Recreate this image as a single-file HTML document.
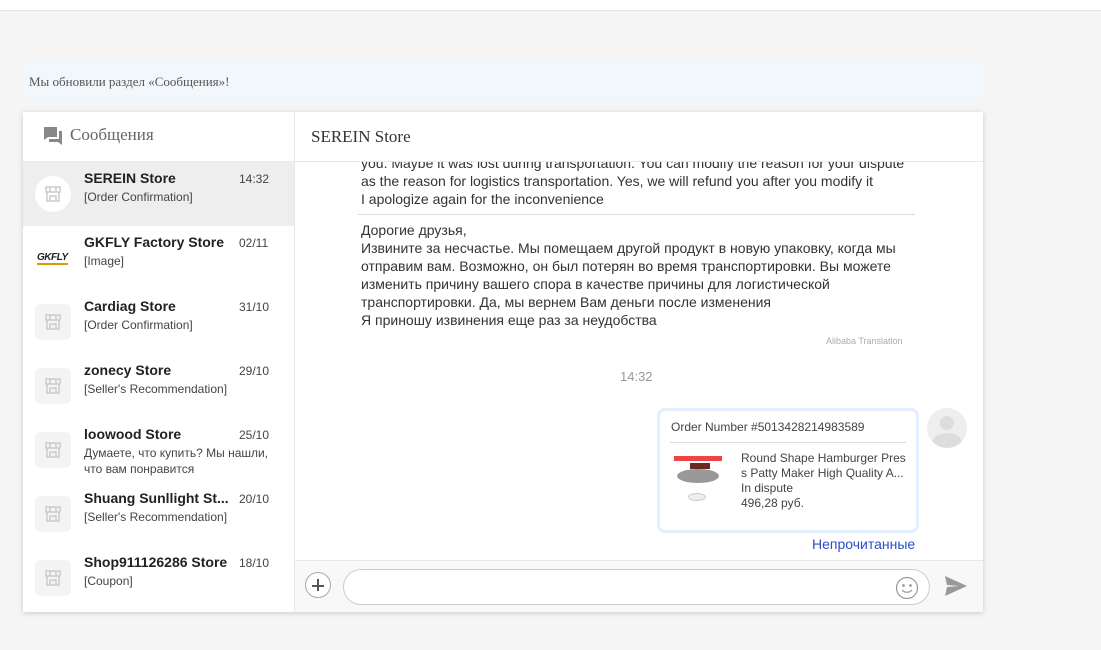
<!DOCTYPE html>
<html><head><meta charset="utf-8"><style>
*{margin:0;padding:0;box-sizing:border-box}
body{width:1101px;height:650px;background:#f5f5f5;font-family:"Liberation Sans",Arial,sans-serif;position:relative;overflow:hidden;color:#333}
.abs{position:absolute}
.top{left:0;top:0;width:1101px;height:11px;background:#fff;border-bottom:1px solid #e3e3e3}
.notice{left:24px;top:60px;width:960px;height:42px;background:#f2f7fc;font-family:"Liberation Serif",serif;font-size:13px;color:#555;padding:14px 0 0 5px}
.panel{left:23px;top:112px;width:960px;height:500px;background:#fff;box-shadow:0 1px 5px rgba(0,0,0,.18)}
.side{left:0;top:0;width:272px;height:500px;border-right:1px solid #e6e6e6}
.sh{height:50px;border-bottom:1px solid #e8e8e8;font-family:"Liberation Serif",serif;font-size:17px;color:#666;padding:13px 0 0 47px;position:relative}
.item{position:absolute;left:0;width:271px;height:64px}
.item .nm{position:absolute;left:61px;top:8px;font-weight:bold;font-size:14px;color:#222;width:150px;white-space:nowrap}
.item .tm{position:absolute;left:216px;top:10px;font-size:12px;color:#444}
.item .sb{position:absolute;left:61px;top:27px;font-size:12px;color:#444;line-height:16px;width:195px}
.av{position:absolute;left:12px;top:14px;width:36px;height:36px;background:#f4f4f4;border-radius:6px}
.av svg{position:absolute;left:9px;top:9px}
.chat{left:272px;top:0;width:688px;height:500px}
.ch{height:50px;border-bottom:1px solid #e8e8e8;font-family:"Liberation Serif",serif;font-size:17px;color:#333;padding:15px 0 0 16px}
.msg{position:absolute;left:63px;width:557px;font-size:14px;line-height:18px;color:#333}
</style></head><body>
<div class="abs top"></div>
<div class="abs notice">Мы обновили раздел «Сообщения»!</div>
<div class="abs panel">
 <div class="abs side">
  <div class="sh"><svg class="abs" style="left:20px;top:14px" width="20" height="20" viewBox="0 0 20 20"><path d="M1 1h13v10H5l-4 3z" fill="#888"/><path d="M16 5h3v14l-4-3H6v-3h10z" fill="#888"/></svg>Сообщения</div>
  <div class="item" style="top:50px;background:#eee"><div class="av" style="background:#fff;border-radius:50%"><svg width="18" height="18" viewBox="0 0 18 18" fill="none" stroke="#ccc" stroke-width="1.5"><path d="M2 2h14v5H2zM6 2v5M12 2v5M3 7v9h12V7M6 16v-5h6v5"/></svg></div><div class="nm">SEREIN Store</div><div class="tm">14:32</div><div class="sb">[Order Confirmation]</div></div>
  <div class="item" style="top:114px"><div style="position:absolute;left:14px;top:26px;font-size:10px;font-weight:bold;font-style:italic;color:#222;letter-spacing:-.5px;border-bottom:2px solid #d4a000">GKFLY</div><div class="nm">GKFLY Factory Store</div><div class="tm">02/11</div><div class="sb">[Image]</div></div>
  <div class="item" style="top:178px"><div class="av"><svg width="18" height="18" viewBox="0 0 18 18" fill="none" stroke="#ccc" stroke-width="1.5"><path d="M2 2h14v5H2zM6 2v5M12 2v5M3 7v9h12V7M6 16v-5h6v5"/></svg></div><div class="nm">Cardiag Store</div><div class="tm">31/10</div><div class="sb">[Order Confirmation]</div></div>
  <div class="item" style="top:242px"><div class="av"><svg width="18" height="18" viewBox="0 0 18 18" fill="none" stroke="#ccc" stroke-width="1.5"><path d="M2 2h14v5H2zM6 2v5M12 2v5M3 7v9h12V7M6 16v-5h6v5"/></svg></div><div class="nm">zonecy Store</div><div class="tm">29/10</div><div class="sb">[Seller's Recommendation]</div></div>
  <div class="item" style="top:306px"><div class="av"><svg width="18" height="18" viewBox="0 0 18 18" fill="none" stroke="#ccc" stroke-width="1.5"><path d="M2 2h14v5H2zM6 2v5M12 2v5M3 7v9h12V7M6 16v-5h6v5"/></svg></div><div class="nm">loowood Store</div><div class="tm">25/10</div><div class="sb">Думаете, что купить? Мы нашли, что вам понравится</div></div>
  <div class="item" style="top:370px"><div class="av"><svg width="18" height="18" viewBox="0 0 18 18" fill="none" stroke="#ccc" stroke-width="1.5"><path d="M2 2h14v5H2zM6 2v5M12 2v5M3 7v9h12V7M6 16v-5h6v5"/></svg></div><div class="nm">Shuang Sunllight St...</div><div class="tm">20/10</div><div class="sb">[Seller's Recommendation]</div></div>
  <div class="item" style="top:434px"><div class="av"><svg width="18" height="18" viewBox="0 0 18 18" fill="none" stroke="#ccc" stroke-width="1.5"><path d="M2 2h14v5H2zM6 2v5M12 2v5M3 7v9h12V7M6 16v-5h6v5"/></svg></div><div class="nm">Shop911126286 Store</div><div class="tm">18/10</div><div class="sb">[Coupon]</div></div>
 </div>
 <div class="abs chat">
  <div class="ch">SEREIN Store</div>
  <div style="position:absolute;left:0;top:50px;width:688px;height:398px;overflow:hidden">
   <div class="msg" style="top:-8px;padding-left:3px">you. Maybe it was lost during transportation. You can modify the reason for your dispute<br>as the reason for logistics transportation. Yes, we will refund you after you modify it<br>I apologize again for the inconvenience</div>
   <div style="position:absolute;left:63px;top:52px;width:557px;border-top:1px solid #ddd"></div>
   <div class="msg" style="top:59px;padding-left:3px">Дорогие друзья,<br>Извините за несчастье. Мы помещаем другой продукт в новую упаковку, когда мы отправим вам. Возможно, он был потерян во время транспортировки. Вы можете изменить причину вашего спора в качестве причины для логистической транспортировки. Да, мы вернем Вам деньги после изменения<br>Я приношу извинения еще раз за неудобства</div>
   <div style="position:absolute;left:531px;top:174px;font-size:9px;color:#aaa">Alibaba Translation</div>
   <div style="position:absolute;left:325px;top:207px;font-size:13px;color:#999">14:32</div>
   <div style="position:absolute;left:362px;top:246px;width:262px;height:125px;border:3px solid #e3effc;border-radius:8px;background:#fff">
    <div style="position:absolute;left:11px;top:9px;font-size:12px;color:#444">Order Number #5013428214983589</div>
    <div style="position:absolute;left:10px;top:31px;width:236px;border-top:1px solid #ddd"></div>
    <div style="position:absolute;left:14px;top:43px;width:52px;height:58px">
     <div style="height:5px;width:48px;background:#e44;margin-top:2px"></div>
     <div style="margin:8px 0 0 3px;width:42px;height:14px;border-radius:50%;background:#999"></div>
     <div style="margin:-20px 0 0 16px;width:20px;height:6px;background:#6b2a20"></div>
     <div style="margin:24px 0 0 14px;width:18px;height:8px;border-radius:50%;background:#eee;border:1px solid #ccc"></div>
    </div>
    <div style="position:absolute;left:81px;top:40px;width:168px;font-size:12px;line-height:15px;color:#444">Round Shape Hamburger Pres s Patty Maker High Quality A...<br>In dispute<br>496,28 руб.</div>
   </div>
   <div style="position:absolute;left:632px;top:246px;width:40px;height:40px;border-radius:50%;background:#eee;overflow:hidden"><div style="position:absolute;left:13px;top:8px;width:14px;height:14px;border-radius:50%;background:#ddd"></div><div style="position:absolute;left:5px;top:25px;width:30px;height:20px;border-radius:50%;background:#ddd"></div></div>
   <div style="position:absolute;left:517px;top:374px;font-size:14px;color:#2a4fc8">Непрочитанные</div>
  </div>
  <div style="position:absolute;left:0;top:448px;width:688px;height:52px;background:#f8f8f8;border-top:1px solid #e8e8e8">
   <div style="position:absolute;left:10px;top:11px;width:26px;height:26px;border-radius:50%;border:1px solid #aaa;background:#fff"><div style="position:absolute;left:6px;top:12px;width:12px;height:1.5px;background:#555"></div><div style="position:absolute;left:11.3px;top:6px;width:1.5px;height:12px;background:#555"></div></div>
   <div style="position:absolute;left:48px;top:8px;width:587px;height:36px;border-radius:18px;border:1px solid #ccc;background:#fff">
    <svg style="position:absolute;left:551px;top:6px" width="24" height="24" viewBox="0 0 24 24" fill="none" stroke="#999" stroke-width="1.2"><circle cx="12" cy="12" r="10.5"/><circle cx="8.5" cy="9.5" r=".8" fill="#999"/><circle cx="15.5" cy="9.5" r=".8" fill="#999"/><path d="M7 14c2.5 3 7.5 3 10 0"/></svg>
   </div>
   <svg style="position:absolute;left:650px;top:15px" width="22" height="20" viewBox="0 0 22 20"><path d="M0 0L22 10L0 20L2 11L14 10L2 9z" fill="#999"/></svg>
  </div>
 </div>
</div>
</body></html>
